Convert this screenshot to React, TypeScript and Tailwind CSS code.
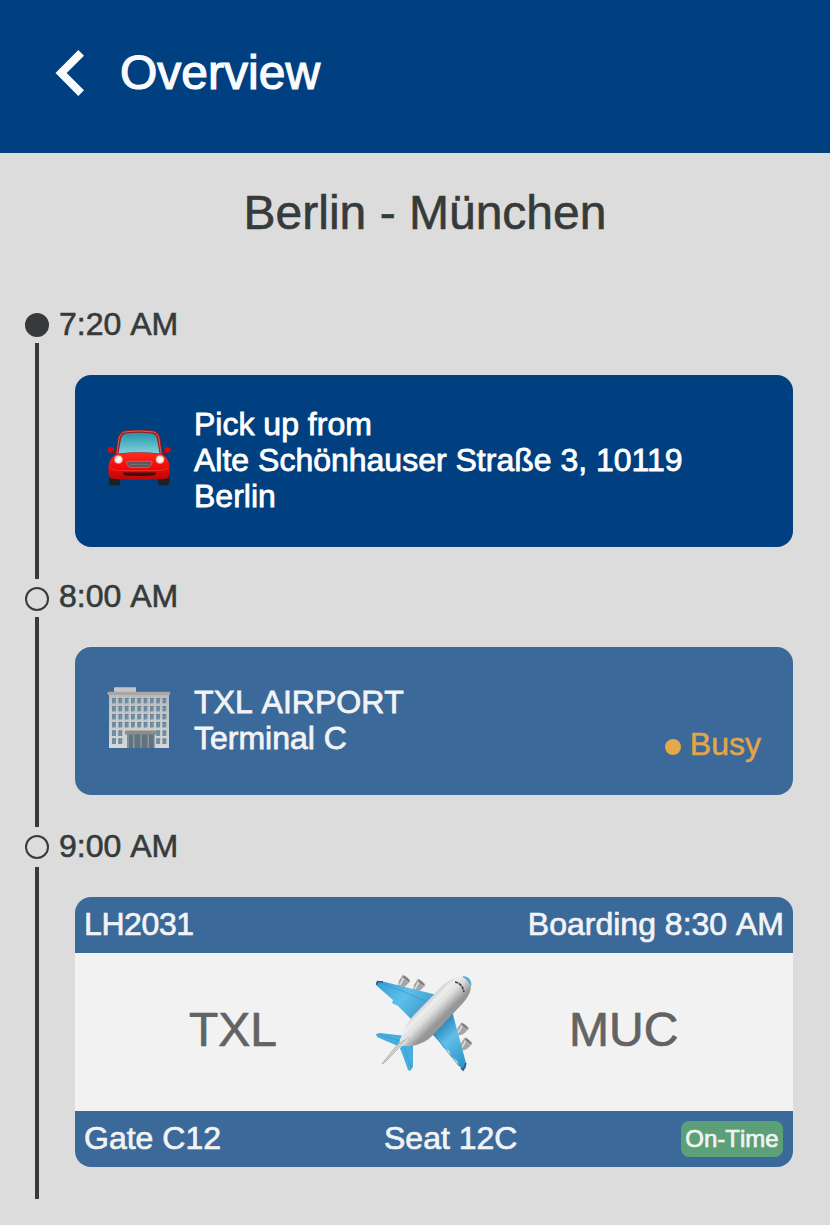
import type { ReactNode } from 'react';

const textFace = "font-['Liberation_Sans',Arial,sans-serif]";

function CarIcon() {
  return (
    <svg viewBox="0 0 90 90" className="-mt-1 h-[90px] w-[90px] shrink-0">
      <defs>
        <linearGradient id="car-body" x1="0" y1="0" x2="0" y2="1">
          <stop offset="0" stopColor="#ff2a1c" />
          <stop offset="0.5" stopColor="#f00d0b" />
          <stop offset="1" stopColor="#b80708" />
        </linearGradient>
        <linearGradient id="car-glass" x1="0" y1="0" x2="0" y2="1">
          <stop offset="0" stopColor="#2794a8" />
          <stop offset="1" stopColor="#7fd3df" />
        </linearGradient>
        <radialGradient id="car-lamp">
          <stop offset="0" stopColor="#ffffff" />
          <stop offset="0.6" stopColor="#fff0ea" />
          <stop offset="1" stopColor="#f0a090" />
        </radialGradient>
      </defs>
      <rect x="13.800" y="60" width="11.500" height="11.5" rx="2.5" fill="#222024" />
      <rect x="63" y="60" width="11.500" height="11.5" rx="2.5" fill="#222024" />
      <ellipse cx="16" cy="36" rx="3.3" ry="2.9" fill="#d20b10" />
      <ellipse cx="72.500" cy="36" rx="3.3" ry="2.9" fill="#d20b10" />
      <path d="M17 37l4 3M71 37l-4 3" stroke="#a00a10" strokeWidth="2" />
      <path d="M20.500 41L22.500 24Q24.500 17 30 16.500Q44 14.800 58 16.500Q63.500 17 65.500 24L67.500 41Z" fill="#9b1c20" />
      <path d="M22 40L24 25Q25.500 18.500 30 17.900Q44 16 58 17.900Q62.500 18.500 64 25L66 40" fill="none" stroke="#c97a74" strokeWidth="0.8" />
      <path d="M23.500 39.500L26 25Q27 20.500 31 19.600Q44 18 57 19.600Q61 20.500 62 25L64.500 39.500Q44 37 23.500 39.500Z" fill="url(#car-glass)" />
      <path d="M22 40Q44 37.500 66 40Q73 43 74.500 51V61Q74 64.500 69 65Q44 67 19 65Q14 64.500 13.500 61V51Q15 43 22 40Z" fill="url(#car-body)" />
      <circle cx="23.500" cy="45.500" r="4.300" fill="url(#car-lamp)" />
      <circle cx="65" cy="45.500" r="4.300" fill="url(#car-lamp)" />
      <path d="M32.500 47.300H56Q57.500 47.300 57 49L55.500 52Q54.700 53.500 52.500 53.500H36Q34 53.500 33.300 52L31.800 49Q31.300 47.300 32.500 47.300Z" fill="#65555b" stroke="#c96a66" strokeWidth="0.8" />
      <path d="M35 50.500H54" stroke="#857679" strokeWidth="0.7" />
      <path d="M15 54Q19 57 27 56.500H61Q69 57 73 54" fill="none" stroke="#f43428" strokeWidth="0.8" />
      <path d="M28.500 58.600H60.500Q62 60 59 61.500Q44 62.500 30 61.500Q27 60 28.500 58.600Z" fill="#3c1115" />
    </svg>
  );
}

const windowColumns = [17.3, 23.6, 29.9, 36.2, 42.5, 48.8, 55.1, 61.4, 67.7];
const windowRows = [23, 31, 39, 47, 55.5, 63.5];

function BuildingIcon() {
  return (
    <svg viewBox="0 0 90 90" className="h-[90px] w-[90px] shrink-0">
      <defs>
        <linearGradient id="wall" x1="0" y1="0" x2="0" y2="1">
          <stop offset="0" stopColor="#b9babb" />
          <stop offset="1" stopColor="#d7d8d9" />
        </linearGradient>
      </defs>
      <rect x="19" y="12.300" width="22" height="5" rx="0.8" fill="#c2c7cb" />
      <rect x="14" y="19" width="60" height="54" fill="url(#wall)" />
      <rect x="12.600" y="16.700" width="62.500" height="3.300" rx="0.6" fill="#aaa6a5" />
      {windowRows.map((y, row) =>
        windowColumns.map((x, col) =>
          row > 3 && col > 1 && col < 7 ? null : (
            <g key={`${x}-${y}`}>
              <rect x={x - 0.6} y={y - 0.5} width="4.600" height="6.500" fill="#d3d6d8" />
              <rect x={x} y={y} width="3.700" height="5.500" fill="#6f90a5" />
              <path d={`M${x} ${y + 0.3}h3.700M${x + 0.3} ${y}v5.500`} stroke="#5d7789" strokeWidth="0.6" />
            </g>
          ),
        ),
      )}
      <rect x="32" y="59" width="28" height="14" fill="#62737f" />
      <path d="M33 59.500V73M38.800 59.500V73M46 59.500V73M53.200 59.500V73M59.300 59.500V73" stroke="#9ba7ad" strokeWidth="1.100" />
      <rect x="30" y="55.500" width="32" height="3.900" rx="0.5" fill="#8e8b8c" />
    </svg>
  );
}

function Engine({ x, y }: { x: number; y: number }) {
  return (
    <g transform={`translate(${x} ${y}) rotate(40)`}>
      <path d="M-4.800-5Q0-7 4.800-5L4.300 1Q2.800 5 0 7Q-2.800 5-4.300 1Z" fill="#a5a5a5" />
      <path d="M-2.500-4Q-1 1-1 4" fill="none" stroke="#dedede" strokeWidth="1.600" />
      <ellipse cy="-5" rx="4.800" ry="1.500" fill="#797979" stroke="#c8c8c8" strokeWidth="0.7" />
    </g>
  );
}

function PlaneIcon() {
  return (
    <svg viewBox="0 0 120 120" className="-mt-[14px] h-[120px] w-[120px] shrink-0">
      <defs>
        <linearGradient id="wing-left" x1="20" y1="16" x2="58" y2="48" gradientUnits="userSpaceOnUse">
          <stop offset="0" stopColor="#3aa3d6" />
          <stop offset="0.5" stopColor="#5fbfea" />
          <stop offset="1" stopColor="#3f9fd0" />
        </linearGradient>
        <linearGradient id="wing-right" x1="70" y1="65" x2="99" y2="95" gradientUnits="userSpaceOnUse">
          <stop offset="0" stopColor="#2d87bc" />
          <stop offset="0.4" stopColor="#61bfe9" />
          <stop offset="1" stopColor="#309acd" />
        </linearGradient>
        <linearGradient id="fuselage" x1="56" y1="36" x2="75" y2="55" gradientUnits="userSpaceOnUse">
          <stop offset="0" stopColor="#b8b8b8" />
          <stop offset="0.35" stopColor="#eeeeee" />
          <stop offset="0.6" stopColor="#dedede" />
          <stop offset="1" stopColor="#969696" />
        </linearGradient>
      </defs>
      <Engine x={38} y={17.500} />
      <Engine x={53} y={21.500} />
      <Engine x={96.500} y={65} />
      <Engine x={100} y={80} />
      <path d="M11 18Q12 15.500 16 16L72 30L47 55L41 49L33 41L27 38L28 35L12 21Z" fill="url(#wing-left)" />
      <path d="M12 17L35 25L60 36" fill="none" stroke="#3b94c5" strokeWidth="0.7" />
      <path d="M11.500 20L12.500 16.500L18 17" fill="none" stroke="#315e77" strokeWidth="1.600" />
      <path d="M87 46L101 98Q102 104 98 105L94 101L92 96L86 91L84 86L78 82L75 77L65 67Z" fill="url(#wing-right)" />
      <path d="M66 66L94 101" fill="none" stroke="#2a83b5" strokeWidth="0.8" />
      <path d="M96 103L98 105L101 98" fill="none" stroke="#315e77" strokeWidth="1.600" />
      <path d="M11 69L15 68L41 71L35 82L12 72Z" fill="#48aedd" />
      <path d="M34 81L48 78L48 102L45 106L43 105L38 91Z" fill="#48aedd" />
      <path d="M13 69L35 76M40 84L46 104" fill="none" stroke="#339acb" strokeWidth="0.8" />
      <path d="M96 11.500Q107 11 106 21Q106 29 98 38L68 70Q60 79 46 81L35 81Q33 76 38 69L41 60L48 51L77 21Q87 12 96 11.500Z" fill="url(#fuselage)" />
      <path d="M98 11.500Q106 12 106 20Q103 15 98 11.500Z" fill="#4aaed8" stroke="#4aaed8" strokeWidth="0.8" />
      <path d="M90 17Q97 18 99 27" fill="none" stroke="#3e4347" strokeWidth="1.600" strokeDasharray="3.5 0.7" />
      <path d="M44 73L36 81L19 98L17 99L20 95L33 79Z" fill="#cfcfcf" stroke="#aaa" strokeWidth="0.8" />
      <path d="M43 74L30 88" stroke="#f7f7f7" strokeWidth="0.9" />
    </svg>
  );
}

interface StopProps {
  time: string;
  size: string;
  rail: string;
  active?: boolean;
  children: ReactNode;
}

function Stop({ time, size, rail, active = false, children }: StopProps) {
  return (
    <li className={`flex pl-5 ${size}`}>
      <div className={`flex w-[34px] shrink-0 flex-col items-center ${rail}`}>
        <span
          className={`h-6 w-6 shrink-0 rounded-full border-2 border-[#363a3a] ${active ? 'bg-[#363a3a]' : ''}`}
        />
        <span className="w-1 flex-1 bg-[#363a3a]" />
      </div>
      <div className="flex min-w-0 flex-1 flex-col pr-[37px]">
        <time className="h-[69px] pl-[5px] text-[#363a3a]">{time}</time>
        <div className="pl-[21px]">{children}</div>
      </div>
    </li>
  );
}

export default function App() {
  return (
    <main
      className={`min-h-[1225px] w-full bg-[#dcdcdc] text-[32px] leading-9 [font-kerning:none] [-webkit-text-stroke:0.6px_currentColor] ${textFace}`}
    >
      <header className="flex h-[153px] items-center bg-[#004080] pb-[7px] pl-[55px] text-[#fafbfc]">
        <svg viewBox="0 0 30 46" className="h-[46px] w-[30px]">
          <path d="M0.500 23L23.300 0L29 5.700L11.700 23L29 40.300L23.300 46Z" fill="currentColor" />
        </svg>
        <span className="ml-[35px] text-[48px] leading-[56px] [-webkit-text-stroke:1.2px_currentColor]">Overview</span>
      </header>

      <h1 className="h-[153px] pt-[32px] pl-5 text-center text-[48px] leading-[56px] text-[#363a3a]">
        Berlin - München
      </h1>

      <ol>
        <Stop time="7:20 AM" size="h-[272px]" rail="-mb-px gap-1.5 pt-[7px]" active>
          <section className="flex h-[172px] items-center rounded-2xl bg-[#004080] pl-5 text-white [-webkit-text-stroke:0.8px_currentColor]">
            <CarIcon />
            <p className="ml-[9px] w-[510px] pb-0.5 [font-kerning:normal]">
              Pick up from
              <br />
              Alte Schönhauser Straße 3, 10119 Berlin
            </p>
          </section>
        </Stop>

        <Stop time="8:00 AM" size="h-[250px]" rail="mb-px gap-1.5 pt-[9px]">
          <section className="flex h-[148px] rounded-2xl bg-[#3b6999] pt-7 pl-5 text-[#f2f3f5] [-webkit-text-stroke:0.8px_currentColor]">
            <BuildingIcon />
            <p className="ml-[9px] flex-1 pt-[9px]">
              TXL AIRPORT
              <br />
              <span className="[font-kerning:normal]">Terminal C</span>
            </p>
            <div className="mb-[33px] flex h-9 items-center gap-[9px] self-end pr-8 text-[#e1a54b] [-webkit-text-stroke:0.5px_currentColor]">
              <span className="mt-[5px] h-4 w-4 rounded-full bg-[#e5a84a]" />
              Busy
            </div>
          </section>
        </Stop>

        <Stop time="9:00 AM" size="h-[371px]" rail="gap-2 pt-[7px]">
          <section className="overflow-hidden rounded-2xl bg-[#3b6999] text-[#f2f3f5] [-webkit-text-stroke:0.7px_currentColor]">
            <div className="flex h-14 justify-between px-[9px] pt-[9px]">
              <span className="tracking-[-0.4px]">LH2031</span>
              <span>Boarding 8:30 AM</span>
            </div>
            <div className="flex h-[158px] items-center bg-[#f2f2f2] text-[48px] leading-[56px] text-[#636363]">
              <span className="w-[290px] pb-1 pl-[114px]">TXL</span>
              <PlaneIcon />
              <span className="pb-1 pl-[84px]">MUC</span>
            </div>
            <div className="flex h-14 items-center px-[9px] pb-0.5">
              <span className="w-[300px]">Gate C12</span>
              <span className="flex-1">Seat 12C</span>
              <span className="mr-px mt-0.5 flex h-9 w-[102px] items-center justify-center rounded-lg bg-[#5ba077] text-[24px] leading-7">
                On-Time
              </span>
            </div>
          </section>
        </Stop>
      </ol>
    </main>
  );
}
